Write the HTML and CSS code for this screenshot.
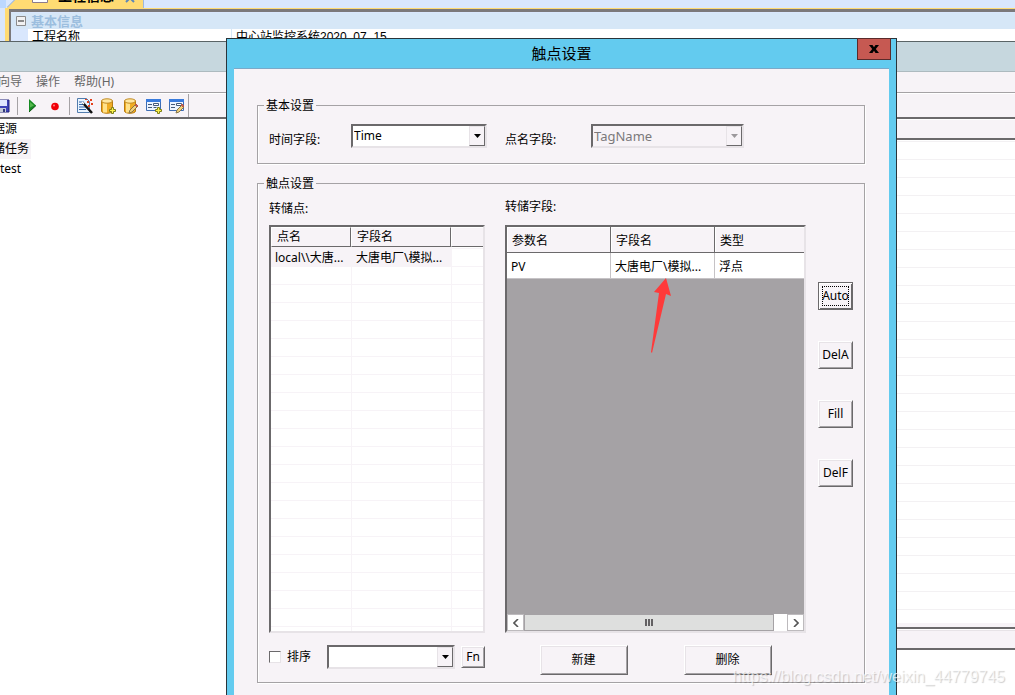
FILE: index.html
```html
<!DOCTYPE html>
<html lang="zh-CN">
<head>
<meta charset="utf-8">
<title>触点设置</title>
<link rel="stylesheet" href="styles.css">
</head>
<body>
<div class="desktop">
  <section class="project">
    <div class="tab-strip">
      <svg class="tab-slope" width="16" height="8" viewBox="0 0 16 8"><path d="M0 8L8 0H16V8Z" fill="#ffdb73"/><path d="M0 7.500L7.500 0" stroke="#8aa6cc" fill="none"/></svg>
      <div class="tab">
        <svg width="16" height="16" viewBox="0 0 16 16"><path d="M.5 .5h15v15H.5z" fill="#fff" stroke="#8c7b8c"/><path d="M3 12l5-5 5 5" stroke="#d33" fill="none"/></svg>
        <span class="tab-name">工程信息</span>
        <svg width="10" height="10" viewBox="0 0 10 10"><path d="M1 1l8 8M9 1L1 9" stroke="#5c86b8" stroke-width="2"/></svg>
      </div>
    </div>
    <div class="grid-frame">
      <div class="grid-group">
        <svg width="10" height="10" viewBox="0 0 10 10"><path d="M.5 .5h9v9h-9z" fill="#f2f2f2" stroke="#8c8c8c"/><path d="M2 5h6" stroke="#222"/></svg>
        <span>基本信息</span>
      </div>
      <div class="grid-line"><span class="grid-key">工程名称</span><span class="grid-value">中心站监控系统2020_07_15</span></div>
    </div>
  </section>

  <section class="manager">
    <div class="manager-title"></div>
    <nav class="menu"><span>向导</span><span>操作</span><span>帮助(H)</span></nav>
    <div class="toolbar">
      <div class="tools">
        <button class="tool" aria-label="保存"><svg width="16" height="16" viewBox="0 0 16 16"><path d="M1 2h14v12H3l-2-2z" fill="#3c42b8" stroke="#23257d"/><path d="M4 2h9v6H4z" fill="#dfe6ff"/><path d="M5 10h7v4H5z" fill="#c5cad8"/><path d="M9 11h2v3H9z" fill="#333a7a"/></svg></button>
        <i class="sep"></i>
        <button class="tool tool-narrow" aria-label="启动"><svg width="15" height="16" viewBox="0 0 15 16"><path d="M4 1l7 6.500-7 6.500z" fill="#168a22"/><path d="M5 4l4 3.500-4 2z" fill="#55b74d"/><path d="M4 14l7-6.500" stroke="#0d5512"/></svg></button>
        <button class="tool tool-narrow" aria-label="停止"><svg width="15" height="16" viewBox="0 0 15 16"><circle cx="8" cy="8.500" r="3.800" fill="#f00008"/><circle cx="7" cy="7.500" r="1" fill="#ff8080"/></svg></button>
        <i class="sep"></i>
        <button class="tool" aria-label="向导"><svg width="16" height="16" viewBox="0 0 16 16"><path d="M.5 .5h9l3 3v11H.5z" fill="#e9f4ff" stroke="#527cad"/><path d="M2 4h5M2 6.500h5M2 9h7M2 11.500h7" stroke="#3165a8"/><path d="M6 5l9 10" stroke="#111" stroke-width="2.500"/><path d="M5 4l2 2" stroke="#fff" stroke-width="1.500"/><path d="M10 3h2v2h-2zM13 1h2v2h-2zM14 5h2v2h-2zM11 7h2v2h-2zM8 1h2v1H8z" fill="#e4411b"/></svg></button>
        <button class="tool" aria-label="新建数据源"><svg width="16" height="16" viewBox="0 0 16 16"><path d="M1.500 3v10c0 3 11 3 11 0V3z" fill="#f0ac23" stroke="#b67b13"/><path d="M3 4h4v10.500H3z" fill="#ffe28b"/><ellipse cx="7" cy="3" rx="5.500" ry="2.200" fill="#ffe7a0" stroke="#c18a20"/><path d="M9.500 11.500h2v-2h2v2h2v2h-2v2h-2v-2h-2z" fill="#fff24a" stroke="#7d8019"/></svg></button>
        <button class="tool" aria-label="编辑数据源"><svg width="16" height="16" viewBox="0 0 16 16"><path d="M1.500 3v10c0 3 11 3 11 0V3z" fill="#f0ac23" stroke="#b67b13"/><path d="M3 4h4v10.500H3z" fill="#ffe28b"/><ellipse cx="7" cy="3" rx="5.500" ry="2.200" fill="#ffe7a0" stroke="#c18a20"/><path d="M6 15l1-3 5-5 2 2-5 5z" fill="#f3d27a" stroke="#86754a"/><path d="M12 7l1-1 2 2-1 1z" fill="#d0614f" stroke="#b3584a"/></svg></button>
        <button class="tool" aria-label="新建任务"><svg width="16" height="16" viewBox="0 0 16 16"><path d="M.5 1.500h14v11H.5z" fill="#edf4ff" stroke="#3e6db3"/><path d="M0 1h15v3H0z" fill="#397bdd"/><path d="M2 6.500h4M2 9.500h4" stroke="#44597a"/><path d="M7.500 5.500h5v2h-5zM7.500 9.500h3" fill="#fff" stroke="#44597a"/><path d="M9.500 11.500h2v-2h2v2h2v2h-2v2h-2v-2h-2z" fill="#fff24a" stroke="#7d8019"/></svg></button>
        <button class="tool" aria-label="编辑任务"><svg width="16" height="16" viewBox="0 0 16 16"><path d="M.5 1.500h14v11H.5z" fill="#edf4ff" stroke="#3e6db3"/><path d="M0 1h15v3H0z" fill="#397bdd"/><path d="M2 6.500h4M2 9.500h4" stroke="#44597a"/><path d="M7.500 5.500h5v2h-5z" fill="#fff" stroke="#44597a"/><path d="M7 15l1-3 5-5 2 2-5 5z" fill="#f3d27a" stroke="#86754a"/><path d="M12 7l1-1 2 2-1 1z" fill="#d0614f" stroke="#b3584a"/></svg></button>
      </div>
    </div>
    <div class="manager-body">
      <ul class="tree">
        <li><span>数据源</span></li>
        <li><span class="tree-current">转储任务</span></li>
        <li class="tree-child"><span>test</span></li>
      </ul>
      <div class="pane">
        <div class="pane-head"></div>
        <div class="pane-rows"></div>
        <div class="pane-status"></div>
        <div class="pane-foot"></div>
      </div>
    </div>
  </section>

  <section class="dialog" role="dialog" aria-labelledby="dialog-title">
    <header class="dialog-bar">
      <h1 id="dialog-title">触点设置</h1>
      <button class="close" aria-label="关闭"><svg width="10" height="8" viewBox="0 0 10 8"><path d="M0 0h3.500L5 2.300 6.500 0H10L6.800 4 10 8H6.500L5 5.700 3.500 8H0l3.200-4z" fill="#000"/></svg></button>
    </header>
    <div class="dialog-body">
      <fieldset class="group">
        <legend>基本设置</legend>
        <div class="fields">
          <label for="time-field">时间字段:</label>
          <span class="combo combo-time">
            <select id="time-field"><option>Time</option></select>
            <span class="drop"><svg width="7" height="4" viewBox="0 0 7 4"><path d="M0 0h7L3.500 4z" fill="#000"/></svg></span>
          </span>
          <label for="tag-field">点名字段:</label>
          <span class="combo combo-off">
            <select id="tag-field" disabled><option>TagName</option></select>
            <span class="drop"><svg width="7" height="4" viewBox="0 0 7 4"><path d="M0 0h7L3.500 4z" fill="#9c999c"/></svg></span>
          </span>
        </div>
      </fieldset>

      <fieldset class="group group-points">
        <legend>触点设置</legend>
        <div class="points">
          <div class="column">
            <h2>转储点:</h2>
            <div class="list">
              <table>
                <colgroup><col class="list-name"><col class="list-field"><col></colgroup>
                <thead><tr><th>点名</th><th>字段名</th><th></th></tr></thead>
                <tbody><tr><td class="picked">local\\大唐...</td><td class="picked">大唐电厂\模拟...</td><td></td></tr></tbody>
              </table>
            </div>
          </div>
          <div class="column">
            <h2 class="raised">转储字段:</h2>
            <div class="sheet">
              <table>
                <colgroup><col class="sheet-wide"><col class="sheet-wide"><col></colgroup>
                <thead><tr><th>参数名</th><th>字段名</th><th>类型</th></tr></thead>
                <tbody><tr><td>PV</td><td>大唐电厂\模拟...</td><td>浮点</td></tr></tbody>
              </table>
              <svg class="arrow" width="22" height="78" viewBox="0 0 22 78"><path d="M16 1L4 15l5 1L1 75l1 1L16 17l5 2z" fill="#ff3a3a"/></svg>
              <div class="scroll">
                <button aria-label="向左"><svg width="6" height="8" viewBox="0 0 6 8"><path d="M5 0L1 4l4 4" fill="none" stroke="#555" stroke-width="1.600"/></svg></button>
                <div class="thumb"><i></i><i></i><i></i></div>
                <button aria-label="向右"><svg width="6" height="8" viewBox="0 0 6 8"><path d="M1 0l4 4-4 4" fill="none" stroke="#555" stroke-width="1.600"/></svg></button>
              </div>
            </div>
          </div>
          <div class="side">
            <button class="btn btn-default"><span>Auto</span></button>
            <button class="btn">DelA</button>
            <button class="btn">Fill</button>
            <button class="btn">DelF</button>
          </div>
          <div class="sorting">
            <input type="checkbox" id="sort"><label for="sort">排序</label>
            <span class="combo">
              <select aria-label="排序字段"><option></option></select>
              <span class="drop"><svg width="7" height="4" viewBox="0 0 7 4"><path d="M0 0h7L3.500 4z" fill="#000"/></svg></span>
            </span>
            <button class="btn btn-fn">Fn</button>
          </div>
          <div class="actions">
            <button class="btn">新建</button>
            <button class="btn">删除</button>
          </div>
        </div>
      </fieldset>
    </div>
  </section>
  <div class="watermark">https://blog.csdn.net/weixin_44779745</div>
</div>
</body>
</html>
```
FILE: styles.css
```css
* { box-sizing: border-box; }

:root {
  --face: #f7f3f7;
  --dark: #6b696b;
  --mid: #a5a2a5;
  --light: #e7e3e7;
}

body {
  margin: 0;
  font: 12px/16px "Noto Sans", "Noto Sans CJK SC", sans-serif;
  color: #000;
}

button, select, input { font: inherit; color: inherit; margin: 0; }
button { padding: 0; }
svg { display: block; flex: none; }

.desktop {
  position: relative;
  height: 100vh;
  overflow: hidden;
  background: #d6e7f7;
}

/* project window behind */
.project { background: #d9e7fd; }
.tab-strip {
  display: flex;
  height: 8px;
  padding-left: 7px;
  overflow: hidden;
  background: linear-gradient(90deg, #bcd8ff 6px, #d9e7fd 6px);
}
.tab {
  display: flex;
  align-items: flex-end;
  gap: 10px;
  width: 121px;
  height: 8px;
  padding: 0 8px 5px 9px;
  background: #ffdb73;
  border-right: 1px solid #9db8dc;
}
.tab-name { flex: 1; font-size: 14px; font-weight: bold; line-height: 14px; white-space: nowrap; }
.grid-frame {
  margin-left: 5px;
  border-left: 4px solid #ffdb73;
  border-top: 1px solid #ffdb73;
  box-shadow: inset 2px 3px 0 #7b797b;
  padding: 4px 0 0 2px;
}
.grid-group {
  display: flex;
  align-items: center;
  gap: 5px;
  height: 16px;
  padding-left: 5px;
  font-size: 13px;
  line-height: 14px;
  font-weight: bold;
  color: #9cbede;
  background: #d6e7f7;
}
.grid-line { display: flex; height: 20px; margin-left: 17px; background: #fff; white-space: nowrap; }
.grid-key { width: 204px; padding-left: 4px; border-right: 1px solid #d6e7f7; }
.grid-value { padding-left: 4px; font-family: "Liberation Sans", "Noto Sans CJK SC", sans-serif; }

/* manager window */
.manager {
  position: absolute;
  inset: 41px 0 0 -31px;
  display: flex;
  flex-direction: column;
  background: #fff;
  border-top: 1px solid #5a6466;
}
.manager-title { height: 30px; background: #c6d7de; border-bottom: 1px solid #adbabf; }
.menu {
  display: flex;
  align-items: center;
  gap: 14px;
  height: 21px;
  padding-left: 29px;
  color: #666;
  background: var(--face);
  border-bottom: 1px solid var(--mid);
}
.toolbar {
  height: 26px;
  padding-left: 25px;
  background: var(--face);
  border-top: 1px solid #fff;
  border-bottom: 2px solid var(--dark);
}
.tools {
  display: inline-flex;
  align-items: center;
  gap: 7px;
  height: 23px;
  padding-right: 3px;
  border-right: 1px solid var(--mid);
}
.tool { width: 16px; height: 16px; border: 0; background: none; }
.tool-narrow { width: 15px; }
.sep { width: 1px; height: 18px; background: var(--mid); }
.manager-body { flex: 1; display: flex; min-height: 0; }
.tree { width: 261px; margin: 0; padding: 0 0 0 12px; list-style: none; }
.tree li { height: 20px; line-height: 20px; }
.tree-child { padding-left: 19px; }
.tree-current { display: inline-block; padding-right: 2px; background: var(--face); }
.pane { flex: 1; display: flex; flex-direction: column; }
.pane-head {
  height: 21px;
  background: var(--face);
  border-top: 1px solid #fff;
  border-bottom: 2px solid var(--dark);
}
.pane-rows {
  flex: 1;
  background: repeating-linear-gradient(#fff 0 1px, #f3f1f3 1px 2px, #fff 2px 18px);
}
.pane-status {
  height: 27px;
  border-top: 4px solid var(--face);
  border-bottom: 2px solid var(--dark);
  background: linear-gradient(var(--dark) 2px, #fff 2px 3px, var(--light) 3px 4px, var(--face) 4px);
}
.pane-foot { height: 45px; }

/* dialog */
.dialog {
  position: absolute;
  inset: 38px 118px 0 226px;
  display: flex;
  flex-direction: column;
  padding: 0 7px;
  background: #63cbef;
  border: 1px solid #29343a;
  border-bottom: 0;
}
.dialog-bar {
  position: relative;
  height: 30px;
  border-bottom: 1px solid #7ba9c8;
}
.dialog-bar h1 { margin: 0; font-size: 15px; font-weight: normal; line-height: 29px; text-align: center; }
.close {
  position: absolute;
  top: -1px;
  right: -2px;
  display: grid;
  place-items: center;
  width: 34px;
  height: 22px;
  background: #c65952;
  border: 1px solid #5a2b2b;
}
.dialog-body {
  flex: 1;
  display: flex;
  flex-direction: column;
  gap: 10px;
  padding: 27px 24px 12px 23px;
  background: var(--face);
}
.group {
  min-width: 0;
  margin: 0;
  padding: 0 11px;
  border: 1px solid var(--mid);
  box-shadow: 1px 1px 0 #fff, inset 1px 0 0 #fff;
}
legend { height: 18px; line-height: 20px; margin-left: -5px; padding: 0 2px; background: var(--face); }
.fields {
  display: grid;
  grid-template-columns: 82px 154px 86px 153px;
  padding: 10px 0 15px;
}
.fields label { padding-top: 8px; }
.combo-time { margin-right: 18px; }

.combo {
  position: relative;
  display: block;
  height: 24px;
  border: 2px solid;
  border-color: var(--dark) var(--light) var(--light) var(--dark);
  background: #fff;
}
.combo select {
  display: block;
  width: 100%;
  height: 20px;
  padding: 0 18px 0 1px;
  border: 0;
  border-radius: 0;
  background: none;
  appearance: none;
  line-height: 18px;
  opacity: 1;
}
.combo-off { background: var(--face); color: #7b797b; }
.combo-off select { font-size: 13px; }
.drop {
  position: absolute;
  top: 0;
  right: 0;
  bottom: 0;
  display: grid;
  place-items: center;
  width: 16px;
  background: var(--face);
  border: 1px solid;
  border-color: var(--light) var(--dark) var(--dark) var(--light);
  pointer-events: none;
}

.group-points { flex: 1; display: flex; flex-direction: column; }
.points {
  flex: 1;
  display: grid;
  grid-template-columns: 216px 1fr 47px;
  grid-template-rows: 1fr 30px;
  gap: 12px 0;
  padding-bottom: 7px;
}
.column { display: flex; flex-direction: column; min-width: 0; }
.column + .column, .actions { margin-left: 20px; }
.column h2 { height: 33px; margin: 0; font-size: 12px; font-weight: normal; line-height: 34px; }
.column .raised { line-height: 30px; }
.list, .sheet {
  flex: 1;
  border: 2px solid;
  border-color: var(--dark) var(--light) var(--light) var(--dark);
}
table { width: 100%; border-collapse: separate; border-spacing: 0; table-layout: fixed; }
th, td { padding: 0; font-weight: normal; text-align: left; white-space: nowrap; overflow: hidden; }
.list {
  background:
    linear-gradient(var(--face), var(--face)) 80px 0 / 1px 100% no-repeat,
    linear-gradient(var(--face), var(--face)) 180px 0 / 1px 100% no-repeat,
    repeating-linear-gradient(#fff 0 3px, var(--face) 3px 4px, #fff 4px 18px);
}
.list-name { width: 80px; }
.list-field { width: 100px; }
.list th {
  height: 20px;
  padding-left: 5px;
  background: var(--face);
  border: 1px solid;
  border-color: #fff var(--dark) var(--dark) #fff;
}
.list th:last-child { border-right: 0; }
.list td { height: 20px; padding: 2px 0 0 4px; }
.list td + td { padding-left: 5px; }
.list .picked { background: var(--face); }
.sheet { position: relative; display: flex; flex-direction: column; background: var(--mid); }
.sheet-wide { width: 104px; }
.sheet th {
  height: 26px;
  padding: 2px 0 0 5px;
  background: var(--face);
  border-right: 1px solid var(--dark);
  border-bottom: 1px solid var(--dark);
  box-shadow: inset 1px 1px 0 #fff;
}
.sheet td {
  height: 26px;
  padding: 2px 0 0 4px;
  background: #fff;
  border-right: 1px solid #c6c3c6;
  border-bottom: 1px solid #c6c3c6;
}
.sheet th:last-child, .sheet td:last-child { border-right: 0; }
.arrow { position: absolute; left: 143px; top: 50px; }
.scroll { display: flex; height: 17px; margin-top: auto; background: #fff; }
.scroll button {
  display: grid;
  place-items: center;
  width: 17px;
  background: #fff;
  border: 1px solid #bdbabd;
}
.thumb {
  flex: 1;
  display: flex;
  align-items: center;
  justify-content: center;
  gap: 1px;
  margin-right: 13px;
  background: #dedfde;
  border: 1px solid var(--mid);
}
.thumb i { width: 2px; height: 7px; background: #636163; }

.btn {
  background: var(--face);
  border: 1px solid;
  border-color: #fff var(--dark) var(--dark) #fff;
  border-radius: 0;
  box-shadow: inset 1px 1px 0 var(--light), inset -1px -1px 0 var(--mid);
}
.side {
  display: flex;
  flex-direction: column;
  gap: 31px;
  margin-left: 12px;
  padding-top: 90px;
}
.side .btn { height: 28px; }
.side .btn-default { border-color: var(--dark); box-shadow: inset 1px 1px 0 #fff, inset -1px -1px 0 var(--dark); }
.btn-default span { display: block; height: 20px; margin: 0 3px; line-height: 19px; outline: 1px dotted #000; outline-offset: -1px; }
.sorting { display: flex; align-items: flex-start; }
.sorting input {
  width: 12px;
  height: 12px;
  margin-top: 6px;
  appearance: none;
  background: #fff;
  border: 1px solid;
  border-color: var(--dark) var(--light) var(--light) var(--dark);
}
.sorting label { margin: 4px 16px 0 6px; }
.sorting .combo { flex: 1; }
.btn-fn { width: 24px; height: 22px; margin: 1px 0 0 6px; }
.actions { display: flex; justify-content: center; gap: 56px; }
.actions .btn { width: 88px; height: 30px; }

.watermark {
  position: absolute;
  right: 10px;
  bottom: 8px;
  font: 16px/20px "Liberation Sans", sans-serif;
  color: rgba(255, 255, 255, 0.7);
  text-shadow: 1px 1px 1px rgba(0, 0, 0, 0.2);
  pointer-events: none;
}
```
